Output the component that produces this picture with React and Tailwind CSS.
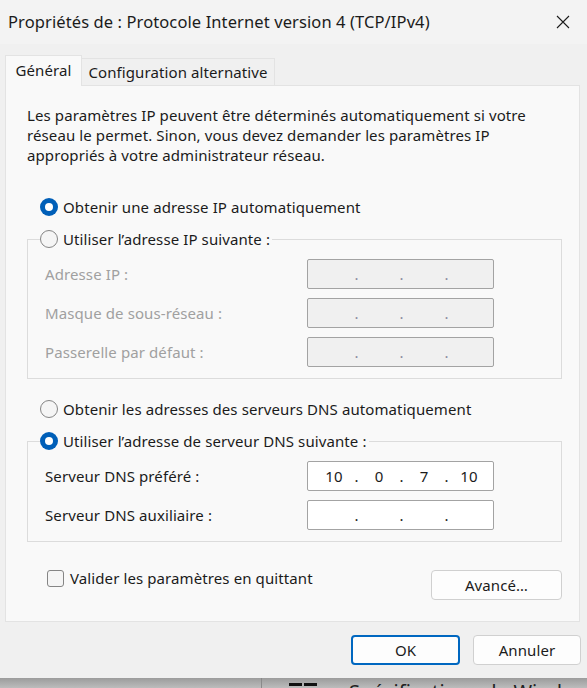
import React from 'react';

const font = { fontFamily: '"Noto Sans", "Open Sans", sans-serif' };

const Radio = ({ checked }) => (
    checked ? (
        <span className="flex h-[18px] w-[18px] shrink-0 items-center justify-center rounded-full bg-[#005fb8]">
            <span className="h-[8px] w-[8px] rounded-full bg-white" />
        </span>
    ) : (
        <span className="h-[18px] w-[18px] shrink-0 rounded-full border border-[#858585] bg-[#f5f5f5]" />
    )
);

// IPv4 field: four octets separated by dots
const IpField = ({ values = ['', '', '', ''], disabled }) => (
    <div
        className={`flex h-[30px] w-[187px] items-center rounded-[2px] border border-[#a3a3a3] pl-[6px] ${
            disabled ? 'bg-[#f0f0f0]' : 'bg-white'
        }`}
    >
        {values.map((v, i) => (
            <React.Fragment key={i}>
                <span className="w-[40px] text-center text-[15px] text-[#1b1b1b]">{v}</span>
                {i < 3 && (
                    <span className={`w-[5px] text-center text-[15px] ${disabled ? 'text-[#8c8ca0]' : 'text-[#1b1b1b]'}`}>.</span>
                )}
            </React.Fragment>
        ))}
    </div>
);

const FieldRow = ({ label, disabled, values }) => (
    <div className="flex items-center justify-between pr-[67px]">
        <span className={`text-[15px] ${disabled ? 'text-[#a0a0a0]' : 'text-[#1b1b1b]'}`}>{label}</span>
        <IpField disabled={disabled} values={values} />
    </div>
);

const Button = ({ children, primary, className = '' }) => (
    <button
        className={`flex h-[30px] items-center justify-center rounded-[4px] bg-[#fdfdfd] text-[15px] text-[#1b1b1b] ${
            primary ? 'border-2 border-[#0067c0]' : 'border border-[#d0d0d0]'
        } ${className}`}
    >
        {children}
    </button>
);

export default function App() {
    return (
        <div className="flex h-[688px] w-[587px] flex-col bg-[#f0f0f0] tracking-[0.1px] text-[#1b1b1b]" style={font}>
            {/* Title bar */}
            <div className="flex h-[44px] shrink-0 items-center justify-between bg-[#f3f3f3] pl-[8px] pr-[17px]">
                <span className="text-[16.5px]">Propriétés de : Protocole Internet version 4 (TCP/IPv4)</span>
                <svg width="14" height="14" viewBox="0 0 14 14" stroke="#1b1b1b" strokeWidth="1.1">
                    <path d="M1 1L13 13M13 1L1 13" />
                </svg>
            </div>

            {/* Tabs */}
            <div className="mt-[11px] flex items-end pl-[5px]">
                <div className="relative z-10 -mb-px flex h-[31px] w-[77px] items-center justify-center border border-b-0 border-[#e3e3e3] bg-[#f9f9f9] pb-[2px] text-[15px]">
                    Général
                </div>
                <div className="flex h-[27px] w-[193px] items-center justify-center border border-b-0 border-l-0 border-[#e3e3e3] bg-[#f0f0f0] text-[15px]">
                    Configuration alternative
                </div>
            </div>

            {/* Tab page */}
            <div className="ml-[5px] mr-[7px] flex h-[537px] flex-col border border-[#e3e3e3] bg-[#f9f9f9] pl-[21px] pr-[17px] pt-[19px]">
                <p className="text-[15px] leading-[20px]">
                    Les paramètres IP peuvent être déterminés automatiquement si votre
                    <br />
                    réseau le permet. Sinon, vous devez demander les paramètres IP
                    <br />
                    appropriés à votre administrateur réseau.
                </p>

                <label className="mt-[32px] ml-[13px] flex h-[20px] items-center gap-[5px] text-[15px]">
                    <Radio checked />
                    Obtenir une adresse IP automatiquement
                </label>

                <fieldset className="mt-[12px] border border-[#dcdcdc] pb-[11px] pl-[17px]">
                    <legend className="-ml-[5px] flex h-[20px] items-center gap-[5px] pr-[2px] text-[15px]">
                        <Radio />
                        Utiliser l’adresse IP suivante :
                    </legend>
                    <div className="flex flex-col gap-[9px] pt-[10px]">
                        <FieldRow label="Adresse IP :" disabled />
                        <FieldRow label="Masque de sous-réseau :" disabled />
                        <FieldRow label="Passerelle par défaut :" disabled />
                    </div>
                </fieldset>

                <label className="mt-[20px] ml-[13px] flex h-[20px] items-center gap-[5px] text-[15px]">
                    <Radio />
                    Obtenir les adresses des serveurs DNS automatiquement
                </label>

                <fieldset className="mt-[12px] border border-[#dcdcdc] pb-[11px] pl-[17px]">
                    <legend className="-ml-[5px] flex h-[20px] items-center gap-[5px] pr-[2px] text-[15px]">
                        <Radio checked />
                        Utiliser l’adresse de serveur DNS suivante :
                    </legend>
                    <div className="flex flex-col gap-[9px] pt-[10px]">
                        <FieldRow label="Serveur DNS préféré :" values={['10', '0', '7', '10']} />
                        <FieldRow label="Serveur DNS auxiliaire :" />
                    </div>
                </fieldset>

                <div className="mt-[28px] flex items-start justify-between">
                    <label className="ml-[20px] flex h-[17px] items-center gap-[6px] text-[15px]">
                        <span className="h-[17px] w-[17px] rounded-[3px] border border-[#858585] bg-[#f5f5f5]" />
                        Valider les paramètres en quittant
                    </label>
                    <Button className="w-[131px]">Avancé…</Button>
                </div>
            </div>

            {/* Dialog buttons */}
            <div className="mt-[13px] flex justify-end gap-[13px] pr-[6px]">
                <Button primary className="w-[109px]">OK</Button>
                <Button className="w-[108px]">Annuler</Button>
            </div>

            {/* Desktop showing under the window */}
            <div className="mt-auto flex h-[10px] shrink-0 overflow-hidden bg-gradient-to-b from-[#9c9c9c] to-[#bcbcbc]">
                <div className="w-[262px] shrink-0 border-r border-[#8a8a8a]" />
                <div className="ml-[27px] mt-[5px] flex shrink-0 gap-[2px]">
                    <span className="h-[3px] w-[13px] bg-[#111]" />
                    <span className="h-[3px] w-[13px] bg-[#111]" />
                </div>
                <span className="ml-[32px] mt-[4px] whitespace-nowrap text-[20px] leading-[20px] text-[#222]">Spécifications de Windows</span>
            </div>
        </div>
    );
}
